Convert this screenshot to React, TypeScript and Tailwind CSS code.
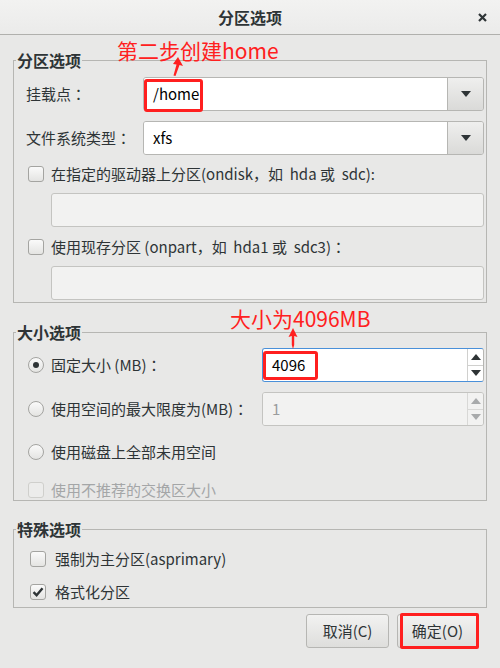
const font = { fontFamily: '"Noto Sans CJK SC", "Noto Sans", sans-serif' };

// full-width colon centred in its cell, as in the reference
function Colon() {
  return <span style={{ fontFamily: '"Noto Sans CJK TC", sans-serif' }}>：</span>;
}

function Check({ checked = false, disabled = false }: { checked?: boolean; disabled?: boolean }) {
  return (
    <div
      className={`w-4 h-4 shrink-0 rounded-[3px] border flex items-center justify-center ${
        disabled ? 'border-[#cfcfcc] bg-[#ececeb]' : 'border-[#a4a4a1] bg-gradient-to-b from-[#fafafa] to-[#e4e4e2]'
      }`}
    >
      {checked && (
        <svg width="12" height="12" viewBox="0 0 12 12">
          <path d="M1.5 6.2 L4.6 9.2 L10.5 2.2" fill="none" stroke="#2e3436" strokeWidth="2.4" />
        </svg>
      )}
    </div>
  );
}

function Radio({ checked = false }: { checked?: boolean }) {
  return (
    <div className="w-4 h-4 shrink-0 rounded-full border border-[#a4a4a1] bg-gradient-to-b from-[#fafafa] to-[#e4e4e2] flex items-center justify-center">
      {checked && <div className="w-[6px] h-[6px] rounded-full bg-[#2e3436]" />}
    </div>
  );
}

function Tri({ up = false, color = '#2e3436' }: { up?: boolean; color?: string }) {
  return (
    <svg width="10" height="6" viewBox="0 0 10 6">
      <path d={up ? 'M0 6 L5 0 L10 6 Z' : 'M0 0 L10 0 L5 6 Z'} fill={color} />
    </svg>
  );
}

function Combo({ value }: { value: string }) {
  return (
    <div className="flex w-[341px] h-[34px] rounded-[3px] border border-[#b6b6b3] overflow-hidden">
      <div className="flex-1 bg-white flex items-center pl-[9px] text-[15px] text-black">{value}</div>
      <div className="w-[36px] border-l border-[#b6b6b3] bg-gradient-to-b from-[#efefee] to-[#dadad8] flex items-center justify-center">
        <Tri />
      </div>
    </div>
  );
}

function Spin({ value, disabled = false }: { value: string; disabled?: boolean }) {
  return (
    <div
      className={`flex w-[222px] h-[34px] rounded-[3px] border overflow-hidden ${
        disabled ? 'border-[#c4c4c1]' : 'border-[#4a90d9] border-r-[#b6b6b3]'
      }`}
    >
      <div
        className={`flex-1 flex items-center pl-[9px] text-[15px] ${
          disabled ? 'bg-[#f2f2f1] text-[#9a9c9d]' : 'bg-white text-black'
        }`}
      >
        {value}
      </div>
      <div className={`w-[16px] border-l flex flex-col ${disabled ? 'border-[#d8d8d6] bg-[#f2f2f1]' : 'border-[#d0d0ce] bg-white'}`}>
        <div className={`flex-1 flex items-center justify-center border-b ${disabled ? 'border-[#d8d8d6]' : 'border-[#d0d0ce]'}`}>
          <Tri up color={disabled ? '#a8aaab' : '#2e3436'} />
        </div>
        <div className="flex-1 flex items-center justify-center">
          <Tri color={disabled ? '#a8aaab' : '#2e3436'} />
        </div>
      </div>
    </div>
  );
}

function Entry() {
  return <div className="ml-[37px] mr-[2px] h-[34px] rounded-[3px] border border-[#c4c4c1] bg-[#f2f2f1]" />;
}

function Frame({ title, className, children }: { title: string; className: string; children: React.ReactNode }) {
  return (
    <div className={`relative border border-[#b6b6b3] flex flex-col ${className}`}>
      <span className="absolute -top-[12px] left-[2px] px-[1px] bg-[#e8e8e7] text-[16px] leading-[22px] font-bold text-[#2e3436]">
        {title}
      </span>
      {children}
    </div>
  );
}

export default function App() {
  return (
    <div style={font} className="relative w-[500px] h-[668px] overflow-hidden bg-[#e8e8e7] text-[#2e3436] text-[15px] leading-[20px]">
      {/* header */}
      <div className="h-[35px] border-b border-[#b0b0ad] bg-gradient-to-b from-[#f2f2f1] to-[#ebebea] grid grid-cols-[1fr_auto_1fr] items-center">
        <div />
        <div className="text-[16px] font-bold">分区选项</div>
        <div className="flex justify-end pr-[13px]">
          <svg width="9" height="9" viewBox="0 0 9 9">
            <path d="M1 1 L8 8 M8 1 L1 8" stroke="#2e3436" strokeWidth="2.2" />
          </svg>
        </div>
      </div>

      <div className="px-[13px] pt-[25px] flex flex-col">
        <Frame title="分区选项" className="h-[243px]">
          <div className="mt-[16px] flex items-center justify-between pl-[12px] pr-[2px]">
            <span>
              挂载点<Colon />
            </span>
            <div className="relative">
              <Combo value="/home" />
              <div className="absolute left-[1px] top-[2px] w-[59px] h-[33px] border-[3px] border-[#ff1f1f] rounded-[3px]" />
            </div>
          </div>
          <div className="mt-[10px] flex items-center justify-between pl-[12px] pr-[2px]">
            <span>
              文件系统类型<Colon />
            </span>
            <Combo value="xfs" />
          </div>
          <div className="mt-[11px] h-4 flex items-center gap-[7px] pl-[14px]">
            <Check />
            <span>在指定的驱动器上分区(ondisk，如&nbsp; hda 或&nbsp; sdc):</span>
          </div>
          <div className="mt-[11px]">
            <Entry />
          </div>
          <div className="mt-[12px] h-4 flex items-center gap-[7px] pl-[14px]">
            <Check />
            <span>
              使用现存分区 (onpart，如&nbsp; hda1 或&nbsp; sdc3)<Colon />
            </span>
          </div>
          <div className="mt-[11px]">
            <Entry />
          </div>
        </Frame>

        <Frame title="大小选项" className="mt-[29px] h-[169px]">
          <div className="mt-[15px] flex items-center justify-between pl-[14px] pr-[2px]">
            <div className="flex items-center gap-[7px]">
              <Radio checked />
              <span>
                固定大小 (MB)<Colon />
              </span>
            </div>
            <div className="relative">
              <Spin value="4096" />
              <div className="absolute left-[1px] top-[3px] w-[55px] h-[29px] border-[3px] border-[#ff1f1f] rounded-[3px]" />
            </div>
          </div>
          <div className="mt-[10px] flex items-center justify-between pl-[14px] pr-[2px]">
            <div className="flex items-center gap-[7px]">
              <Radio />
              <span>
                使用空间的最大限度为(MB)<Colon />
              </span>
            </div>
            <Spin value="1" disabled />
          </div>
          <div className="mt-[18px] h-4 flex items-center gap-[7px] pl-[14px]">
            <Radio />
            <span>使用磁盘上全部未用空间</span>
          </div>
          <div className="mt-[22px] h-4 flex items-center gap-[7px] pl-[14px] text-[#a4a6a7]">
            <Check disabled />
            <span>使用不推荐的交换区大小</span>
          </div>
        </Frame>

        <Frame title="特殊选项" className="mt-[28px] h-[79px]">
          <div className="mt-[21px] h-4 flex items-center gap-[9px] pl-[16px]">
            <Check />
            <span>强制为主分区(asprimary)</span>
          </div>
          <div className="mt-[17px] h-4 flex items-center gap-[9px] pl-[16px]">
            <Check checked />
            <span>格式化分区</span>
          </div>
        </Frame>

        <div className="mt-[6px] flex justify-end gap-[8px] pr-[9px]">
          <button className="w-[83px] h-[34px] rounded-[3px] border border-[#b6b6b3] bg-gradient-to-b from-[#f2f2f1] to-[#dededc] text-[15px]">
            取消(C)
          </button>
          <div className="relative">
            <button className="w-[81px] h-[34px] rounded-[3px] border border-[#b6b6b3] bg-gradient-to-b from-[#f2f2f1] to-[#dededc] text-[15px]">
              确定(O)
            </button>
            <div className="absolute left-[3px] -top-[1px] w-[79px] h-[36px] border-[3px] border-[#ff1f1f] rounded-[2px]" />
          </div>
        </div>
      </div>

      {/* annotations */}
      <div className="absolute left-[117px] top-[36px] text-[21px] leading-[28px] text-[#ff2020] whitespace-nowrap">
        第二步创建home
      </div>
      <svg className="absolute left-[168px] top-[56px]" width="16" height="22" viewBox="0 0 16 22">
        <path d="M10 1 L15 10 L11.5 9 L7.5 20 L5.5 19.5 L8.5 8.5 L5 8 Z" fill="#ff2020" />
      </svg>
      <div className="absolute left-[230px] top-[304px] text-[21px] leading-[28px] text-[#ff2020] whitespace-nowrap">
        大小为4096MB
      </div>
      <svg className="absolute left-[288px] top-[328px]" width="10" height="21" viewBox="0 0 10 21">
        <path d="M5 0 L9.5 9 L6.2 8 L6.2 17 L5 21 L3.8 17 L3.8 8 L0.5 9 Z" fill="#ff2020" />
      </svg>
    </div>
  );
}
